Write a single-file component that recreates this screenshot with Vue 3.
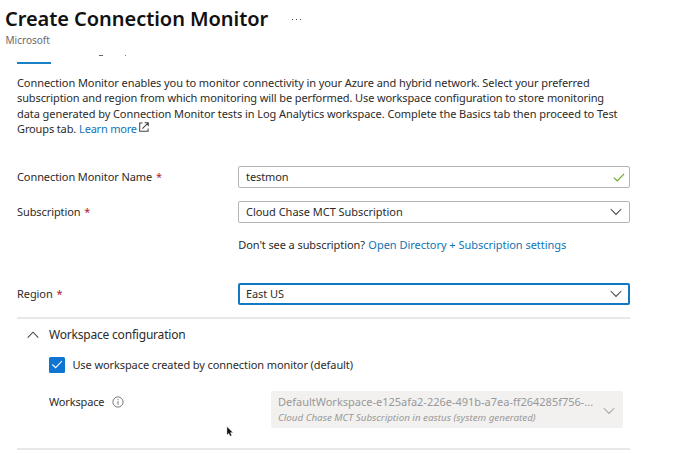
<script setup>
const intro = [
  { text: 'Connection Monitor enables you to monitor connectivity in your Azure and hybrid network. Select your preferred', ls: -0.081 },
  { text: 'subscription and region from which monitoring will be performed. Use workspace configuration to store monitoring', ls: -0.11 },
  { text: 'data generated by Connection Monitor tests in Log Analytics workspace. Complete the Basics tab then proceed to Test', ls: -0.069 },
]
</script>

<template>
  <main class="page">
    <header class="head">
      <h1>Create Connection Monitor</h1>
      <span class="more"><i></i><i></i><i></i></span>
    </header>
    <div class="org">Microsoft</div>
    <div class="tabs">
      <span class="active"></span><span class="tail"></span><span class="tail dot"></span>
    </div>

    <div class="intro">
      <div v-for="l in intro" :key="l.text" :style="{ letterSpacing: l.ls + 'px' }">{{ l.text }}</div>
      <div class="last">
        <span>Groups tab.</span><a class="learn">Learn more</a>
        <svg class="ext" width="10" height="10" viewBox="0 0 10 10">
          <path d="M3.5 .9H.7V9.3H9.1V6.4M5.6 .7H9.3V4.3M9.2 .8L3.4 6.6" />
        </svg>
      </div>
    </div>

    <div class="row name">
      <label>Connection Monitor Name <b>*</b></label>
      <div class="field">
        <span>testmon</span>
        <svg class="check" width="12" height="9" viewBox="0 0 12 9"><path d="M.8 4.6L4.2 7.8L11 1" /></svg>
      </div>
    </div>
    <div class="row sub">
      <label>Subscription <b>*</b></label>
      <div class="field">
        <span class="value">Cloud Chase MCT Subscription</span>
        <svg class="chev" width="12" height="8" viewBox="0 0 12 8"><path d="M.7 1L6 6.4L11.3 1" /></svg>
      </div>
    </div>
    <div class="hint"><span>Don't see a subscription?</span><a>Open Directory + Subscription settings</a></div>
    <div class="row region">
      <label>Region <b>*</b></label>
      <div class="field focus">
        <span>East US</span>
        <svg class="chev" width="12" height="8" viewBox="0 0 12 8"><path d="M.7 1L6 6.4L11.3 1" /></svg>
      </div>
    </div>

    <section class="config">
      <div class="title">
        <svg class="chev" width="12" height="8" viewBox="0 0 12 8"><path d="M.7 6.6L6 1.2L11.3 6.6" /></svg>
        <span>Workspace configuration</span>
      </div>
      <div class="option">
        <span class="box">
          <svg width="12" height="9" viewBox="0 0 12 9"><path d="M1.4 4.5L4.6 7.7L10.9 1.2" /></svg>
        </span>
        <span>Use workspace created by connection monitor (default)</span>
      </div>
      <div class="workspace">
        <div class="wlabel">
          <span>Workspace</span>
          <svg width="12" height="12" viewBox="0 0 12 12">
            <circle cx="6" cy="6" r="5.1" /><path d="M6 5.1V8.8M6 3.1V4.2" />
          </svg>
        </div>
        <div class="disabled">
          <div>
            <div class="ws">DefaultWorkspace-e125afa2-226e-491b-a7ea-ff264285f756-...</div>
            <div class="desc">Cloud Chase MCT Subscription in eastus (system generated)</div>
          </div>
          <svg class="chev" width="12" height="8" viewBox="0 0 12 8"><path d="M.7 1L6 6.4L11.3 1" /></svg>
        </div>
      </div>
    </section>

    <svg class="cursor" width="8" height="11" viewBox="0 0 8 11">
      <path d="M1 .7V8.8L2.8 7.2L4.1 10.1L5.6 9.4L4.3 6.6H6.8Z" />
    </svg>
  </main>
</template>

<style>
body { margin: 0; background: #fff; overflow: hidden; }
</style>

<style scoped>
.page {
  position: relative;
  box-sizing: border-box;
  width: 680px;
  height: 453px;
  overflow: hidden;
  background: #fff;
  color: #2c2b2a;
  font: 11px/15.33px "Noto Sans", "Open Sans", sans-serif;
  letter-spacing: -0.085px;
  white-space: nowrap;
}
svg { flex: none; fill: none; stroke: #444; stroke-width: 1.05; }
a { color: #0f74b6; }
.head { display: flex; align-items: center; height: 33px; padding: 4px 0 0 5px; box-sizing: border-box; }
h1 { margin: 0; width: 262px; font-size: 20px; line-height: 28px; font-weight: 600; letter-spacing: -0.05px; color: #111; }
.more { display: flex; gap: 2.5px; margin: 2px 0 0 24.5px; }
.more i { width: 1.6px; height: 1.6px; background: #444; }
.org { height: 14px; padding-left: 5.5px; font-size: 10px; line-height: 14px; letter-spacing: 0; color: #69686a; }
.tabs { display: flex; height: 28px; padding-left: 17px; }
.active { width: 34px; height: 2px; margin-top: 14.6px; background: #1a82c4; }
.tail { width: 4px; height: 1px; margin: 8px 0 0 47.5px; background: #666; }
.tail.dot { width: 1px; margin-left: 22.5px; background: #888; }
.intro { padding-left: 17px; height: 91px; box-sizing: border-box; }
.last { display: flex; letter-spacing: -0.13px; }
.learn { margin-left: 3px; letter-spacing: -0.22px; width: 57px; }
.ext { margin: 1.5px 0 0 2.5px; }
.row { display: flex; align-items: center; height: 22px; padding-left: 17px; }
.row label { width: 221px; }
.row b { font-weight: 400; color: #b0202c; margin-left: 1px; }
.field {
  display: flex;
  align-items: center;
  justify-content: space-between;
  box-sizing: border-box;
  width: 392px;
  height: 22px;
  padding: 0 7px;
  border: 1px solid #b5b4b3;
  border-radius: 2px;
}
.focus { border: 2px solid #1079c0; padding: 0 6px; }
.value { letter-spacing: -0.03px; }
.check { stroke: #75ab3c; stroke-width: 1.2; margin-right: -3px; }
.sub { margin-top: 13px; }
.hint { display: flex; gap: 3.5px; margin-top: 14px; padding-left: 238.3px; height: 16px; letter-spacing: -0.09px; }
.hint a { letter-spacing: -0.035px; }
.region { margin-top: 29.5px; }
.config {
  width: 613px;
  height: 133px;
  box-sizing: border-box;
  margin: 12px 0 0 17px;
  border-top: 2px solid #e9e8e7;
  border-bottom: 2px solid #e9e8e7;
}
.title { display: flex; align-items: center; gap: 10px; height: 31px; padding: 1px 0 0 10px; box-sizing: border-box; font-size: 12px; letter-spacing: -0.2px; }
.option { display: flex; align-items: center; gap: 7px; height: 30px; padding-left: 32.4px; letter-spacing: -0.09px; }
.box { display: flex; align-items: center; justify-content: center; width: 16px; height: 16px; border-radius: 1.5px; background: #0f75d3; }
.box svg { stroke: #fff; stroke-width: 1.1; }
.workspace { display: flex; justify-content: space-between; padding: 11px 7.5px 0 32px; }
.wlabel { display: flex; align-items: center; gap: 8px; height: 22px; letter-spacing: -0.15px; }
.wlabel svg { stroke: #6a6a6a; stroke-width: .9; }
.disabled {
  display: flex;
  align-items: center;
  justify-content: space-between;
  box-sizing: border-box;
  width: 352px;
  height: 37px;
  padding: 1px 8px 0 7.5px;
  border-radius: 2px;
  background: #f2f1f0;
  color: #999897;
}
.disabled .chev { stroke: #a8a7a6; margin-top: 2px; }
.ws { letter-spacing: -0.01px; line-height: 16px; }
.desc { font-size: 9.8px; font-style: italic; line-height: 16px; letter-spacing: 0; }
.cursor { position: absolute; left: 226px; top: 426px; fill: #111; stroke: #bbb; stroke-width: .4; }
</style>
